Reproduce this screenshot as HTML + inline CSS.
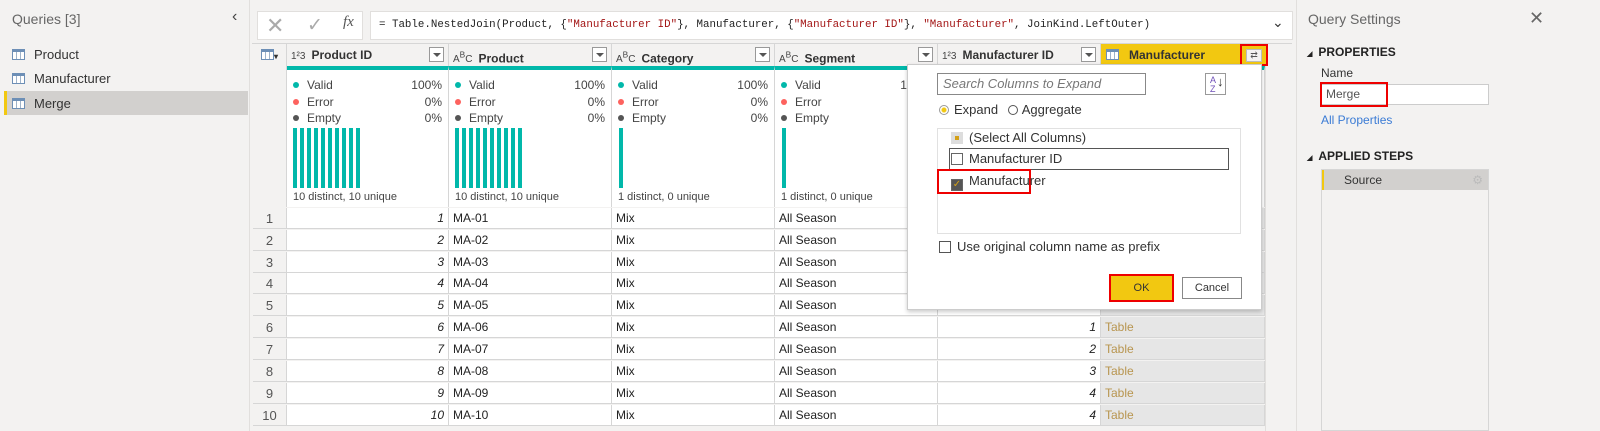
<!DOCTYPE html>
<html><head><meta charset="utf-8"><style>
*{box-sizing:border-box;margin:0;padding:0}
body{width:1600px;height:431px;overflow:hidden;background:#f3f2f1;font-family:"Liberation Sans",sans-serif;font-size:12px;color:#333;position:relative}
.a{position:absolute}
.lp{left:0;top:0;width:250px;height:431px;background:#f3f2f1;border-right:1px solid #e1dfdd}
.qi{position:absolute;left:12px;font-size:13px;color:#333}
.ti{display:inline-block;width:13px;height:11px;border:1px solid #6d8fb6;vertical-align:-1px;margin-right:9px;background:linear-gradient(#6d8fb6 0 2px,transparent 2px),repeating-linear-gradient(90deg,transparent 0 3px,#9fb3c9 3px 4px),#fff}
.hdr{position:absolute;top:44px;height:22px;background:#f3f2f1;border-right:1px solid #d6d6d6;font-weight:bold;font-size:12px;color:#333;line-height:22px}
.dd{position:absolute;right:4px;top:3px;width:15px;height:15px;border:1px solid #999;background:#fff}
.dd:after{content:"";position:absolute;left:3px;top:5px;border:4px solid transparent;border-top:4px solid #555}
.ty{font-weight:normal;font-size:10px;margin:0 6px 0 4px;color:#444}
.prof{position:absolute;top:66px;height:141px;background:#fff;border-right:1px solid #d6d6d6;border-top:4px solid #01b8aa}
.pl{position:absolute;left:6px;font-size:12px;color:#444}
.pl i{display:inline-block;width:6px;height:6px;border-radius:50%;margin-right:8px;vertical-align:1px}
.pr{position:absolute;right:6px;font-size:12px;color:#444}
.bar{position:absolute;top:58px;width:4px;height:60px;background:#01b8aa}
.ds{position:absolute;left:6px;top:121px;font-size:11px;color:#444}
.row{position:absolute;left:253px;height:22px;width:1012px;display:flex}
.row div{height:21px;border-right:1px solid #d6d6d6;border-bottom:1px solid #d6d6d6;background:#fff;line-height:21px;padding:0 4px;font-size:12px;color:#222;white-space:nowrap}
.row .n{width:34px;background:#f3f2f1;text-align:center;color:#555;font-size:13px}
.row .c1{width:162px;text-align:right;font-style:italic}
.row .c2,.row .c3,.row .c4,.row .c5{width:163px}
.row .c5{text-align:right;font-style:italic}
.row .c6{width:164px;background:#e6e6e6;color:#b8954f}
.rp{left:1296px;top:0;width:304px;height:431px;background:#f3f2f1;border-left:1px solid #e1dfdd}
.cb{display:inline-block;width:12px;height:12px;border:1px solid #666;background:#fff;vertical-align:-2px;margin-right:6px}
</style></head><body>
<div class="a lp">
 <div class="a" style="left:12px;top:11px;font-size:14px;color:#666">Queries [3]</div>
 <div class="a" style="left:232px;top:8px;font-size:16px;color:#444">&#8249;</div>
 <div class="qi" style="top:47px"><span class="ti"></span>Product</div>
 <div class="qi" style="top:71px"><span class="ti"></span>Manufacturer</div>
 <div class="a" style="left:4px;top:91px;width:244px;height:24px;background:#d2d0ce;border-left:3px solid #f2c811"></div>
 <div class="qi" style="top:96px"><span class="ti"></span>Merge</div>
</div>
<div class="a" style="left:257px;top:11px;width:106px;height:29px;background:#fff;border:1px solid #e1dfdd"></div>
<div class="a" style="left:266px;top:13px;font-size:22px;color:#aaa">&#10005;</div>
<div class="a" style="left:307px;top:14px;font-size:19px;color:#aaa">&#10003;</div>
<div class="a" style="left:343px;top:14px;font-size:15px;color:#555;font-style:italic;font-family:'Liberation Serif',serif">fx</div>
<div class="a" style="left:370px;top:11px;width:923px;height:29px;background:#fff;border:1px solid #e1dfdd;font-family:'Liberation Mono',monospace;font-size:10.8px;line-height:27px;padding-left:8px;color:#222;white-space:nowrap">= Table.NestedJoin(Product, {<span style="color:#a31515">"Manufacturer ID"</span>}, Manufacturer, {<span style="color:#a31515">"Manufacturer ID"</span>}, <span style="color:#a31515">"Manufacturer"</span>, JoinKind.LeftOuter)</div>
<div class="a" style="left:1272px;top:14px;font-size:14px;color:#333">&#8964;</div>
<div class="a" style="left:252px;top:43px;width:1040px;height:388px;background:#f3f2f1;border-top:1px solid #d6d6d6"></div>
<div class="a" style="left:1265px;top:44px;width:27px;height:387px;background:#f3f2f1;border-left:1px solid #e1dfdd"></div>
<div class="hdr" style="left:253px;width:34px"><span class="ti" style="margin:0 0 0 8px"></span><span style="font-size:8px">&#9662;</span></div>
<div class="hdr" style="left:287px;width:162px"><span class="ty">1²3</span>Product ID<span class="dd"></span></div>
<div class="hdr" style="left:449px;width:163px"><span class="ty">A<sup>B</sup>C</span>Product<span class="dd"></span></div>
<div class="hdr" style="left:612px;width:163px"><span class="ty">A<sup>B</sup>C</span>Category<span class="dd"></span></div>
<div class="hdr" style="left:775px;width:163px"><span class="ty">A<sup>B</sup>C</span>Segment<span class="dd"></span></div>
<div class="hdr" style="left:938px;width:163px"><span class="ty">1²3</span>Manufacturer ID<span class="dd"></span></div>
<div class="hdr" style="left:1101px;width:164px;background:#f2c811"><span class="ti" style="margin:0 10px 0 5px"></span>Manufacturer</div>
<div class="a" style="left:1240px;top:44px;width:28px;height:22px;border:2px solid #e00;background:#f2c811"><div style="position:absolute;left:4px;top:3px;width:16px;height:13px;background:#f3f2f1;border:1px solid #bbb;font-size:9px;line-height:11px;text-align:center;color:#555">&#8644;</div></div>
<div class="prof" style="left:253px;width:34px;background:#f3f2f1;border-top:none"></div>
<div class="prof" style="left:287px;width:162px">
 <div class="pl" style="top:8px"><i style="background:#01b8aa"></i>Valid</div><div class="pr" style="top:8px">100%</div>
 <div class="pl" style="top:25px"><i style="background:#fd625e"></i>Error</div><div class="pr" style="top:25px">0%</div>
 <div class="pl" style="top:41px"><i style="background:#555"></i>Empty</div><div class="pr" style="top:41px">0%</div>
 <div class="bar" style="left:6px"></div><div class="bar" style="left:13px"></div><div class="bar" style="left:20px"></div><div class="bar" style="left:27px"></div><div class="bar" style="left:34px"></div><div class="bar" style="left:41px"></div><div class="bar" style="left:48px"></div><div class="bar" style="left:55px"></div><div class="bar" style="left:62px"></div><div class="bar" style="left:69px"></div>
 <div class="ds">10 distinct, 10 unique</div></div>
<div class="prof" style="left:449px;width:163px">
 <div class="pl" style="top:8px"><i style="background:#01b8aa"></i>Valid</div><div class="pr" style="top:8px">100%</div>
 <div class="pl" style="top:25px"><i style="background:#fd625e"></i>Error</div><div class="pr" style="top:25px">0%</div>
 <div class="pl" style="top:41px"><i style="background:#555"></i>Empty</div><div class="pr" style="top:41px">0%</div>
 <div class="bar" style="left:6px"></div><div class="bar" style="left:13px"></div><div class="bar" style="left:20px"></div><div class="bar" style="left:27px"></div><div class="bar" style="left:34px"></div><div class="bar" style="left:41px"></div><div class="bar" style="left:48px"></div><div class="bar" style="left:55px"></div><div class="bar" style="left:62px"></div><div class="bar" style="left:69px"></div>
 <div class="ds">10 distinct, 10 unique</div></div>
<div class="prof" style="left:612px;width:163px">
 <div class="pl" style="top:8px"><i style="background:#01b8aa"></i>Valid</div><div class="pr" style="top:8px">100%</div>
 <div class="pl" style="top:25px"><i style="background:#fd625e"></i>Error</div><div class="pr" style="top:25px">0%</div>
 <div class="pl" style="top:41px"><i style="background:#555"></i>Empty</div><div class="pr" style="top:41px">0%</div>
 <div class="bar" style="left:7px"></div><div class="ds">1 distinct, 0 unique</div></div>
<div class="prof" style="left:775px;width:163px">
 <div class="pl" style="top:8px"><i style="background:#01b8aa"></i>Valid</div><div class="pr" style="top:8px">100%</div>
 <div class="pl" style="top:25px"><i style="background:#fd625e"></i>Error</div><div class="pr" style="top:25px">0%</div>
 <div class="pl" style="top:41px"><i style="background:#555"></i>Empty</div><div class="pr" style="top:41px">0%</div>
 <div class="bar" style="left:7px"></div><div class="ds">1 distinct, 0 unique</div></div>
<div class="prof" style="left:938px;width:163px"><div class="pr" style="top:8px">1</div></div>
<div class="prof" style="left:1101px;width:164px"></div>
<div class="row" style="top:208px"><div class="n">1</div><div class="c1">1</div><div class="c2">MA-01</div><div class="c3">Mix</div><div class="c4">All Season</div><div class="c5">1</div><div class="c6">Table</div></div>
<div class="row" style="top:230px"><div class="n">2</div><div class="c1">2</div><div class="c2">MA-02</div><div class="c3">Mix</div><div class="c4">All Season</div><div class="c5">2</div><div class="c6">Table</div></div>
<div class="row" style="top:252px"><div class="n">3</div><div class="c1">3</div><div class="c2">MA-03</div><div class="c3">Mix</div><div class="c4">All Season</div><div class="c5">3</div><div class="c6">Table</div></div>
<div class="row" style="top:273px"><div class="n">4</div><div class="c1">4</div><div class="c2">MA-04</div><div class="c3">Mix</div><div class="c4">All Season</div><div class="c5">4</div><div class="c6">Table</div></div>
<div class="row" style="top:295px"><div class="n">5</div><div class="c1">5</div><div class="c2">MA-05</div><div class="c3">Mix</div><div class="c4">All Season</div><div class="c5">4</div><div class="c6">Table</div></div>
<div class="row" style="top:317px"><div class="n">6</div><div class="c1">6</div><div class="c2">MA-06</div><div class="c3">Mix</div><div class="c4">All Season</div><div class="c5">1</div><div class="c6">Table</div></div>
<div class="row" style="top:339px"><div class="n">7</div><div class="c1">7</div><div class="c2">MA-07</div><div class="c3">Mix</div><div class="c4">All Season</div><div class="c5">2</div><div class="c6">Table</div></div>
<div class="row" style="top:361px"><div class="n">8</div><div class="c1">8</div><div class="c2">MA-08</div><div class="c3">Mix</div><div class="c4">All Season</div><div class="c5">3</div><div class="c6">Table</div></div>
<div class="row" style="top:383px"><div class="n">9</div><div class="c1">9</div><div class="c2">MA-09</div><div class="c3">Mix</div><div class="c4">All Season</div><div class="c5">4</div><div class="c6">Table</div></div>
<div class="row" style="top:405px"><div class="n">10</div><div class="c1">10</div><div class="c2">MA-10</div><div class="c3">Mix</div><div class="c4">All Season</div><div class="c5">4</div><div class="c6">Table</div></div>
<div class="a" style="left:907px;top:64px;width:355px;height:246px;background:#fff;border:1px solid #ccc;box-shadow:0 2px 4px rgba(0,0,0,.2)">
 <div class="a" style="left:29px;top:8px;width:209px;height:22px;border:1px solid #888;font-style:italic;color:#777;font-size:13px;line-height:20px;padding-left:5px">Search Columns to Expand</div>
 <div class="a" style="left:297px;top:8px;width:21px;height:22px;border:1px solid #999;font-size:9px;line-height:9px;color:#6f4fb8;padding:2px 0 0 4px">A<br>Z<span style="position:absolute;left:11px;top:3px;color:#333;font-size:13px">&#8595;</span></div>
 <div class="a" style="left:31px;top:37px;font-size:13px;color:#333"><span style="display:inline-block;width:10px;height:10px;border-radius:50%;border:1px solid #999;background:radial-gradient(#f2c811 0 2px,#fff 3px);vertical-align:-1px;margin-right:5px"></span>Expand <span style="display:inline-block;width:10px;height:10px;border-radius:50%;border:1.5px solid #555;vertical-align:-1px;margin:0 4px 0 6px"></span>Aggregate</div>
 <div class="a" style="left:29px;top:63px;width:304px;height:106px;border:1px solid #e1e1e1"></div>
 <div class="a" style="left:43px;top:65px;font-size:13px;color:#333"><span class="cb" style="border-color:#ccc;background:#ccc;box-shadow:inset 0 0 0 2px #ddd;background:#d4a017;border:2px solid #ddd"></span>(Select All Columns)</div>
 <div class="a" style="left:41px;top:83px;width:280px;height:22px;border:1px solid #555"></div>
 <div class="a" style="left:43px;top:86px;font-size:13px;color:#333"><span class="cb"></span>Manufacturer ID</div>
 <div class="a" style="left:29px;top:104px;width:94px;height:25px;border:2px solid #e00"></div>
 <div class="a" style="left:43px;top:108px;font-size:13px;color:#333"><span class="cb" style="font-size:10px;line-height:10px;color:#d4a017;text-align:center;background:#555">&#10003;</span>Manufacturer</div>
 <div class="a" style="left:31px;top:174px;font-size:13px;color:#333"><span class="cb" style="border:1.5px solid #555"></span>Use original column name as prefix</div>
 <div class="a" style="left:201px;top:209px;width:65px;height:28px;border:2px solid #e00;background:#f2c811;text-align:center;line-height:24px;font-size:11px;color:#333">OK</div>
 <div class="a" style="left:274px;top:212px;width:60px;height:22px;border:1px solid #888;text-align:center;line-height:20px;font-size:11px;color:#333">Cancel</div>
</div>
<div class="a rp">
 <div class="a" style="left:11px;top:11px;font-size:14px;color:#666">Query Settings</div>
 <div class="a" style="left:232px;top:8px;font-size:18px;color:#666">&#10005;</div>
 <div class="a" style="left:10px;top:45px;font-size:12px;font-weight:bold;color:#222"><span style="font-size:7px;margin-right:6px">&#9698;</span>PROPERTIES</div>
 <div class="a" style="left:24px;top:66px;font-size:12px;color:#333">Name</div>
 <div class="a" style="left:24px;top:84px;width:168px;height:21px;background:#fff;border:1px solid #ccc"></div>
 <div class="a" style="left:23px;top:82px;width:68px;height:25px;border:2px solid #e00;font-size:12px;line-height:21px;padding-left:4px;color:#555">Merge</div>
 <div class="a" style="left:24px;top:113px;font-size:12px;color:#3a7bd5">All Properties</div>
 <div class="a" style="left:10px;top:149px;font-size:12px;font-weight:bold;color:#222"><span style="font-size:7px;margin-right:6px">&#9698;</span>APPLIED STEPS</div>
 <div class="a" style="left:24px;top:169px;width:168px;height:262px;border:1px solid #d6d6d6;background:#f3f2f1"></div>
 <div class="a" style="left:25px;top:170px;width:166px;height:20px;background:#d2d0ce;border-left:2px solid #f2c811;font-size:12px;line-height:20px;padding-left:20px;color:#333">Source<span style="position:absolute;right:5px;color:#bbb">&#9881;</span></div>
</div>
</body></html>
